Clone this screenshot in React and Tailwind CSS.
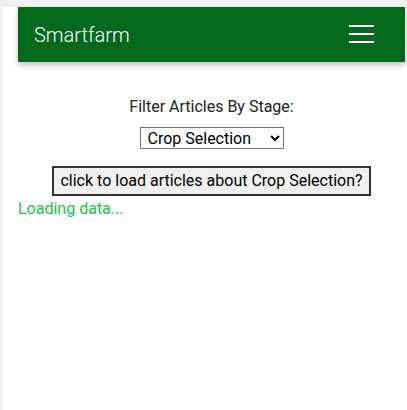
import React from 'react';

const Hamburger = () => (
    <svg width="26" height="20" viewBox="0 0 26 20" className="block">
        <rect x="0" y="0" width="25" height="2" fill="#ffffff" />
        <rect x="0" y="8" width="25" height="2" fill="#ffffff" />
        <rect x="0" y="16" width="25" height="2" fill="#ffffff" />
    </svg>
);

export default function App() {
    return (
        <div className="min-h-screen bg-[#f1f1f1] pl-[3px] pt-[7px]" style={{ fontFamily: 'Roboto, "Liberation Sans", sans-serif' }}>
            <div className="min-h-[403px] bg-white pl-[15px] pr-[2px]">
                <header className="flex h-[55px] items-center justify-between bg-[#02691d] pl-4 pr-[30px] shadow-[0_3px_6px_rgba(0,0,0,0.25)]">
                    <span className="text-[20px] font-light text-white">Smartfarm</span>
                    <Hamburger />
                </header>
                <div className="flex flex-col items-center pt-[35px]">
                    <label className="text-[16px] leading-[19px] text-[#222]">Filter Articles By Stage:</label>
                    <select className="mt-[11px] h-[22px] w-[144px] border border-[#767676] bg-white pl-[3px] text-[16px] text-black">
                        <option>Crop Selection</option>
                        <option>Planting</option>
                        <option>Harvesting</option>
                    </select>
                    <button className="mt-[17px] h-[30px] border-2 border-[#333] bg-[#efefef] px-[6px] text-[16px] text-black">
                        click to load articles about Crop Selection?
                    </button>
                </div>
                <p className="mt-[3px] text-[16px] leading-[19px] text-[#22c44c]">Loading data...</p>
            </div>
        </div>
    );
}
